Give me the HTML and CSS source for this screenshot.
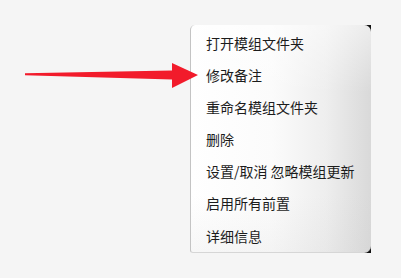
FILE: index.html
```html
<!DOCTYPE html>
<html>
<head>
<meta charset="utf-8">
<link rel="stylesheet" href="styles.css">
</head>
<body>
<div class="stage">
  <svg class="arrow" width="200" height="40" viewBox="0 0 200 40">
    <polygon points="25,10.2 172,7.5 172,0 198,12 172,25 172,16.5 25,12.2" fill="#f21b2b"/>
  </svg>
  <div class="frame">
    <span class="corner corner-top"></span>
    <span class="corner corner-bottom"></span>
    <ul class="menu">
      <li class="item">打开模组文件夹</li>
      <li class="item">修改备注</li>
      <li class="item">重命名模组文件夹</li>
      <li class="item">删除</li>
      <li class="item">设置/取消 忽略模组更新</li>
      <li class="item">启用所有前置</li>
      <li class="item">详细信息</li>
    </ul>
  </div>
</div>
</body>
</html>
```
FILE: styles.css
```css
html, body {
  margin: 0;
  padding: 0;
  background: #f5f5f5;
}
.stage {
  position: relative;
  width: 401px;
  height: 278px;
  padding: 25px 0 0 190px;
  box-sizing: border-box;
  font-family: "Noto Sans CJK SC", "Noto Sans", sans-serif;
}
.arrow {
  position: absolute;
  left: 0;
  top: 63px;
  z-index: 2;
}
.frame {
  position: relative;
  width: 181px;
  height: 228px;
}
.corner {
  position: absolute;
  right: 0;
  width: 7px;
  height: 7px;
  background: #111;
}
.corner-top { top: 0; }
.corner-bottom { bottom: 0; }
.menu {
  position: relative;
  z-index: 1;
  list-style: none;
  margin: 0;
  padding: 2px 0;
  height: 100%;
  box-sizing: border-box;
  border-left: 1px solid #c4c4c4;
  border-bottom: 1px solid #d6d6d6;
  border-radius: 5px 7px 7px 3px;
  background:
    linear-gradient(to bottom, rgba(255,255,255,0.5), rgba(255,255,255,0) 30%, rgba(255,255,255,0) 75%, rgba(200,200,200,0.15)),
    linear-gradient(to right, #ffffff 0%, #fbfbfb 45%, #eeeeee 75%, #d9d9d9 100%);
}
.item {
  height: 32.1px;
  line-height: 32px;
  padding-left: 15px;
  font-size: 14px;
  color: #1c1c1c;
  white-space: nowrap;
}
```
